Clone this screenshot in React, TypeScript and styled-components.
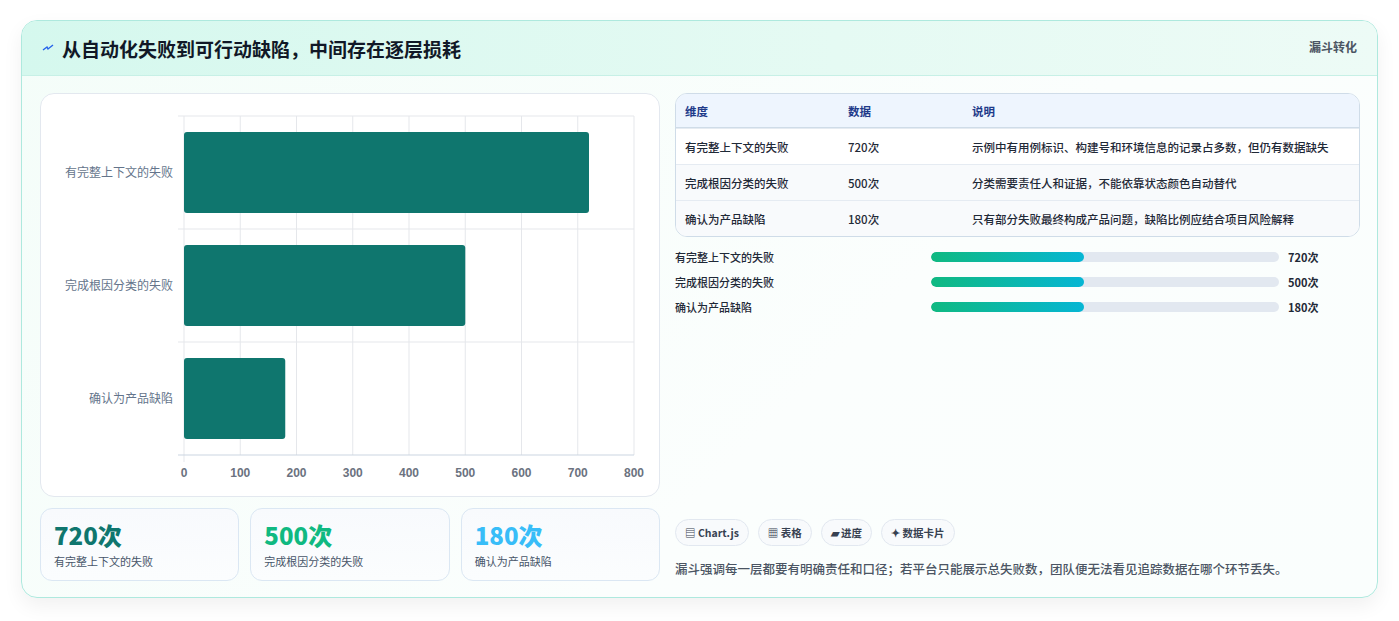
import React from "react";
import styled, { createGlobalStyle } from "styled-components";

const Global = createGlobalStyle`
  html, body { margin: 0; padding: 0; background: #f1f2f3; }
  body { font-family: "Noto Sans CJK SC", "Noto Sans", sans-serif; }
`;

const Page = styled.div`
  width: 1399px; height: 621px; box-sizing: border-box;
  padding: 20px 21px 0 21px; background: #fff;
`;
const Card = styled.div`
  height: 578px; box-sizing: border-box;
  border: 1px solid #aee9de; border-radius: 16px;
  background: linear-gradient(135deg, #f4fdf9 0%, #fbfefd 60%, #fafefd 100%);
  box-shadow: 0 8px 20px rgba(0,0,0,0.06);
  overflow: hidden; display: flex; flex-direction: column;
`;
const Header = styled.div`
  height: 55px; box-sizing: border-box; flex-shrink: 0;
  display: flex; align-items: center; justify-content: space-between;
  padding: 0 20px; border-bottom: 1px solid #c7f0e6;
  background: linear-gradient(90deg, #d5f8ee 0%, #e5faf3 60%, #edfbf6 100%);
`;
const Title = styled.h1`
  margin: 0; font-size: 19px; font-weight: 700; color: #111827;
  display: flex; align-items: center; gap: 8px;
`;
const Tag = styled.div`
  align-self: flex-start; margin-top: 17px; font-size: 12px; font-weight: 700; color: #4b5563;
`;
const Body = styled.div`
  flex: 1; display: grid; grid-template-columns: 620px 685px; gap: 15px;
  padding: 17px 18px 17px 18px;
`;
const Left = styled.div` display: flex; flex-direction: column; gap: 11px; `;
const ChartPanel = styled.div`
  height: 404px; box-sizing: border-box; background: #fff;
  border: 1px solid #e3e8ef; border-radius: 14px;
`;
const Kpis = styled.div` display: grid; grid-template-columns: repeat(3, 1fr); gap: 11px; `;
const Kpi = styled.div`
  height: 73px; box-sizing: border-box; padding: 10px 13px;
  border: 1px solid #dbe7f3; border-radius: 12px;
  background: linear-gradient(180deg, #f8fafd, #fbfdfe);
`;
const KpiVal = styled.div<{ $c: string }>`
  font-size: 24px; font-weight: 800; color: ${p => p.$c}; line-height: 32px;
`;
const KpiLabel = styled.div` font-size: 11px; color: #475569; margin-top: 2px; `;
const Right = styled.div` display: flex; flex-direction: column; `;
const Table = styled.div`
  border: 1px solid #cfdce8; border-radius: 12px; overflow: hidden; background: #fff;
`;
const Row = styled.div<{ $head?: boolean; $alt?: boolean }>`
  display: grid; grid-template-columns: 163px 124px 1fr;
  height: ${p => (p.$head ? 33 : 35)}px; align-items: center; padding: 0 9px;
  font-size: 11.5px; color: ${p => (p.$head ? "#1e3a8a" : "#1f2937")};
  font-weight: ${p => (p.$head ? 700 : 500)};
  background: ${p => (p.$head ? "#eef5fe" : p.$alt ? "#f8fafc" : "#fff")};
  border-top: ${p => (p.$head ? "none" : "1px solid #e5ebf2")};
  ${p => p.$head && "border-bottom: 1px solid #cfdce8;"}
`;
const Bars = styled.div` display: flex; flex-direction: column; gap: 8px; margin-top: 11px; `;
const BarRow = styled.div`
  display: grid; grid-template-columns: 256px 357px 1fr; gap: 0; align-items: center;
  height: 17px; font-size: 11px; font-weight: 500; color: #1f2937;
`;
const Track = styled.div` height: 10px; border-radius: 5px; background: #e2e8f0; margin-right: 9px; overflow: hidden;`;
const Fill = styled.div`
  height: 100%; border-radius: 5px; background: linear-gradient(90deg, #10b981, #06b6d4);
`;
const BarVal = styled.div` font-weight: 700; color: #1f2937; `;
const Spacer = styled.div` flex: 1; `;
const Chips = styled.div` display: flex; gap: 9px; `;
const Chip = styled.div`
  height: 27px; box-sizing: border-box; padding: 0 9px; border: 1px solid #e2e8f0;
  border-radius: 14px; background: #f8fafc; display: flex; align-items: center; gap: 4px;
  font-size: 10.5px; font-weight: 700; color: #374151;
`;
const Note = styled.p` margin: 13px 0 3px; font-size: 12.5px; color: #4b5563; font-weight: 500; `;

const data = [
  { l: "有完整上下文的失败", v: 720 },
  { l: "完成根因分类的失败", v: 500 },
  { l: "确认为产品缺陷", v: 180 },
];

function Chart() {
  const x0 = 143, w = 450, y0 = 22, h = 339;
  const sx = (v: number) => x0 + (v / 800) * w;
  return (
    <svg width="618" height="402">
      {Array.from({ length: 9 }, (_, i) => (
        <g key={i}>
          <line x1={sx(i * 100)} x2={sx(i * 100)} y1={y0} y2={y0 + h + (i === 0 ? 7 : 0)} stroke="#e5e7eb" />
          <text x={sx(i * 100)} y={383} textAnchor="middle" fontSize="12" fontWeight="700" fill="#6b7280" fontFamily="Liberation Sans, sans-serif">{i * 100}</text>
        </g>
      ))}
      {[0, 1, 2, 3].map(i => (
        <line key={i} x1={x0 - 6} x2={x0 + w} y1={y0 + i * 113} y2={y0 + i * 113} stroke={i === 3 ? "#cbd5e1" : "#e5e7eb"} />
      ))}
      {data.map((d, i) => (
        <g key={d.l}>
          <rect x={x0} y={y0 + i * 113 + 16} width={sx(d.v) - x0} height={81} rx="3" fill="#0f766e" />
          <text x={132} y={y0 + i * 113 + 61} textAnchor="end" fontSize="12" fill="#64748b">{d.l}</text>
        </g>
      ))}
    </svg>
  );
}

export default function App() {
  return (
    <Page>
      <Global />
      <Card>
        <Header>
          <Title>
            <svg width="12" height="8" viewBox="0 0 12 8"><path d="M1 6 L5 3 L6 5 L11 1" stroke="#2563eb" strokeWidth="1.4" fill="none" /></svg>
            从自动化失败到可行动缺陷，中间存在逐层损耗
          </Title>
          <Tag>漏斗转化</Tag>
        </Header>
        <Body>
          <Left>
            <ChartPanel><Chart /></ChartPanel>
            <Kpis>
              <Kpi><KpiVal $c="#0f766e">720次</KpiVal><KpiLabel>有完整上下文的失败</KpiLabel></Kpi>
              <Kpi><KpiVal $c="#10b981">500次</KpiVal><KpiLabel>完成根因分类的失败</KpiLabel></Kpi>
              <Kpi><KpiVal $c="#38bdf8">180次</KpiVal><KpiLabel>确认为产品缺陷</KpiLabel></Kpi>
            </Kpis>
          </Left>
          <Right>
            <Table>
              <Row $head><span>维度</span><span>数据</span><span>说明</span></Row>
              <Row><span>有完整上下文的失败</span><span>720次</span><span>示例中有用例标识、构建号和环境信息的记录占多数，但仍有数据缺失</span></Row>
              <Row $alt><span>完成根因分类的失败</span><span>500次</span><span>分类需要责任人和证据，不能依靠状态颜色自动替代</span></Row>
              <Row $alt><span>确认为产品缺陷</span><span>180次</span><span>只有部分失败最终构成产品问题，缺陷比例应结合项目风险解释</span></Row>
            </Table>
            <Bars>
              {data.map(d => (
                <BarRow key={d.l}>
                  <span>{d.l}</span>
                  <Track><Fill style={{ width: "44%" }} /></Track>
                  <BarVal>{d.v}次</BarVal>
                </BarRow>
              ))}
            </Bars>
            <Spacer />
            <Chips>
              <Chip>▤ Chart.js</Chip>
              <Chip>▦ 表格</Chip>
              <Chip>▰ 进度</Chip>
              <Chip>✦ 数据卡片</Chip>
            </Chips>
            <Note>漏斗强调每一层都要有明确责任和口径；若平台只能展示总失败数，团队便无法看见追踪数据在哪个环节丢失。</Note>
          </Right>
        </Body>
      </Card>
    </Page>
  );
}
